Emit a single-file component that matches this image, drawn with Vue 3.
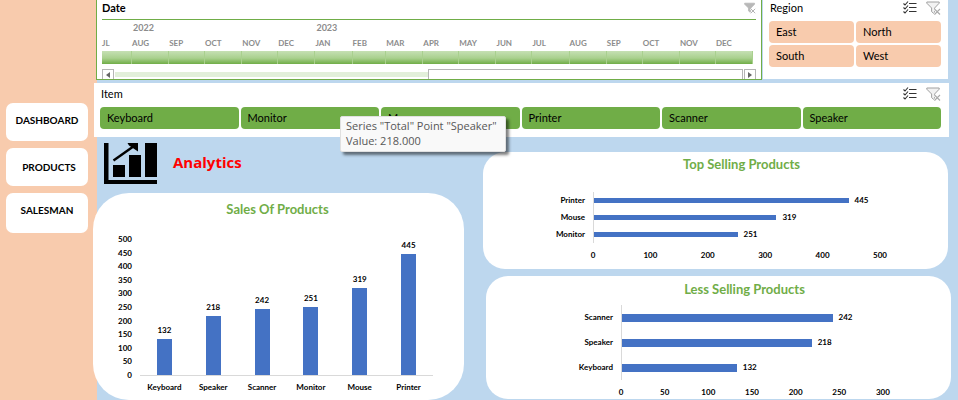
<script setup>
import { computed, h } from 'vue'

const navItems = ['Dashboard', 'Products', 'Salesman']

const months = [
  { name: 'JL', days: 25 },
  { name: 'AUG', days: 31, year: 2022 },
  { name: 'SEP', days: 30 },
  { name: 'OCT', days: 31 },
  { name: 'NOV', days: 30 },
  { name: 'DEC', days: 31 },
  { name: 'JAN', days: 31, year: 2023 },
  { name: 'FEB', days: 28 },
  { name: 'MAR', days: 31 },
  { name: 'APR', days: 30 },
  { name: 'MAY', days: 31 },
  { name: 'JUN', days: 30 },
  { name: 'JUL', days: 31 },
  { name: 'AUG', days: 31 },
  { name: 'SEP', days: 30 },
  { name: 'OCT', days: 31 },
  { name: 'NOV', days: 30 },
  { name: 'DEC', days: 31 },
]

const regions = ['East', 'North', 'South', 'West']
const items = ['Keyboard', 'Monitor', 'Mouse', 'Printer', 'Scanner', 'Speaker']

const sales = [
  { name: 'Keyboard', value: 132 },
  { name: 'Speaker', value: 218 },
  { name: 'Scanner', value: 242 },
  { name: 'Monitor', value: 251 },
  { name: 'Mouse', value: 319 },
  { name: 'Printer', value: 445 },
]
const salesTicks = [500, 450, 400, 350, 300, 250, 200, 150, 100, 50, 0]

const rankings = computed(() => {
  const sorted = [...sales].sort((a, b) => b.value - a.value)
  return [
    { id: 'top', title: 'Top Selling Products', rows: sorted.slice(0, 3), max: 500, ticks: [0, 100, 200, 300, 400, 500] },
    { id: 'less', title: 'Less Selling Products', rows: sorted.slice(-3), max: 300, ticks: [0, 50, 100, 150, 200, 250, 300] },
  ]
})

const MultiSelectIcon = () =>
  h('svg', { width: 14, height: 13, viewBox: '0 0 14 13', 'aria-hidden': 'true' }, [
    h('path', {
      d: 'M6 2.5h7.5M6 6.5h7.5M6 10.5h7.5M.5 2.5l1.5 1.5L5 .5M.5 6.5L2 8l3-3.5M.5 10.5L2 12l3-3.5',
      fill: 'none',
      stroke: '#333',
      'stroke-width': 1.1,
    }),
  ])

const ClearFilterIcon = (props) =>
  h('svg', { width: props.solid ? 12 : 15, height: props.solid ? 12 : 14, viewBox: '0 0 15 14', 'aria-hidden': 'true' }, [
    h('path', {
      d: 'M.8 1h12.4v1.2L8.6 7v6.2L5.6 10.6V7L.8 2.2z',
      fill: props.solid ? '#b8b8b8' : '#f2f2f2',
      stroke: props.solid ? '#b8b8b8' : '#a0a0a0',
      'stroke-width': 1,
    }),
    h('path', { d: 'M8.5 8l5.5 5.5M14 8l-5.5 5.5', fill: 'none', stroke: '#fff', 'stroke-width': 2.6 }),
    h('path', { d: 'M8.5 8l5.5 5.5M14 8l-5.5 5.5', fill: 'none', stroke: '#aaa', 'stroke-width': 1.1 }),
  ])
ClearFilterIcon.props = { solid: Boolean }
</script>

<template>
  <div class="page">
    <nav class="sidebar">
      <button v-for="item in navItems" :key="item" type="button" class="nav-button">{{ item }}</button>
    </nav>

    <main class="content">
      <div class="filters">
        <section class="timeline">
          <header class="timeline-head">
            <h2>Date</h2>
            <button type="button" class="icon-button" aria-label="Clear date filter"><ClearFilterIcon solid /></button>
          </header>
          <div class="months">
            <div v-for="(m, i) in months" :key="i" class="month" :style="{ flexGrow: m.days }">
              <span class="year">{{ m.year }}</span>
              <span class="month-name">{{ m.name }}</span>
              <span class="month-bar"></span>
            </div>
          </div>
          <div class="scroller">
            <button type="button" class="scroll-button" aria-label="Scroll left">
              <svg width="4" height="6" viewBox="0 0 4 6"><path d="M4 0v6L0 3z" fill="#666" /></svg>
            </button>
            <div class="scroll-track"></div>
            <div class="scroll-thumb"></div>
            <button type="button" class="scroll-button" aria-label="Scroll right">
              <svg width="4" height="6" viewBox="0 0 4 6"><path d="M0 0v6l4-3z" fill="#666" /></svg>
            </button>
          </div>
        </section>

        <section class="slicer region">
          <header class="slicer-head">
            <h2>Region</h2>
            <button type="button" class="icon-button" aria-label="Multi-select regions"><MultiSelectIcon /></button>
            <button type="button" class="icon-button" aria-label="Clear region filter"><ClearFilterIcon /></button>
          </header>
          <div class="options region-options">
            <button v-for="r in regions" :key="r" type="button" class="option peach">{{ r }}</button>
          </div>
        </section>
      </div>

      <section class="slicer item">
        <header class="slicer-head">
          <h2>Item</h2>
          <button type="button" class="icon-button" aria-label="Multi-select items"><MultiSelectIcon /></button>
          <button type="button" class="icon-button" aria-label="Clear item filter"><ClearFilterIcon /></button>
        </header>
        <div class="options item-options">
          <button v-for="i in items" :key="i" type="button" class="option green">{{ i }}</button>
        </div>
        <div class="tooltip" role="tooltip">Series "Total" Point "Speaker"<br />Value: 218.000</div>
      </section>

      <div class="board">
        <div class="left">
          <header class="analytics">
            <svg width="54" height="41" viewBox="0 0 54 41" aria-hidden="true">
              <path d="M1 0h4.5v37H54v4H1z" />
              <path d="M10 22h12v12H10zM26 12h12v22H26zM42 0h12v34H42z" />
              <path d="M10.5 17.5L31 3" fill="none" stroke="#000" stroke-width="2.4" />
              <path d="M24.500 0H35v8.500l-3-2-2.500-1.800-3.500-2.200z" />
            </svg>
            <h1>Analytics</h1>
          </header>

          <section class="card sales">
            <h2 class="card-title">Sales Of Products</h2>
            <div class="column-chart">
              <div class="y-axis">
                <span v-for="t in salesTicks" :key="t">{{ t }}</span>
              </div>
              <div class="columns">
                <div v-for="s in sales" :key="s.name" class="column">
                  <span class="column-value">{{ s.value }}</span>
                  <span class="column-bar" :style="{ height: s.value / 5 + '%' }"></span>
                </div>
              </div>
              <div class="column-names">
                <span v-for="s in sales" :key="s.name">{{ s.name }}</span>
              </div>
            </div>
          </section>
        </div>

        <div class="right">
          <section v-for="r in rankings" :key="r.id" class="card ranking" :class="r.id">
            <h2 class="card-title">{{ r.title }}</h2>
            <div class="bar-chart">
              <div v-for="row in r.rows" :key="row.name" class="bar-row">
                <span class="bar-name">{{ row.name }}</span>
                <div class="bar-track">
                  <span class="bar" :style="{ width: (row.value / r.max) * 100 + '%' }"></span>
                  <span class="bar-value">{{ row.value }}</span>
                </div>
              </div>
              <div class="x-axis">
                <span v-for="t in r.ticks" :key="t">{{ t }}</span>
              </div>
            </div>
          </section>
        </div>
      </div>
    </main>
  </div>
</template>

<style>
body {
  margin: 0;
}
</style>

<style scoped>
.page {
  display: flex;
  min-height: 100vh;
  background: linear-gradient(to right, #f8cbad 97px, #bdd7ee 97px);
  font-family: Lato, "Liberation Sans", sans-serif;
  color: #000;
}
.page * {
  box-sizing: border-box;
}
h1,
h2 {
  margin: 0;
}
button {
  margin: 0;
  padding: 0;
  border: 0;
  font-family: inherit;
  color: inherit;
}
svg {
  display: block;
}

.sidebar {
  display: flex;
  flex-direction: column;
  gap: 7px;
  flex: none;
  width: 93px;
  padding: 103px 5px 0 6px;
}
.nav-button {
  height: 38px;
  padding-bottom: 4px;
  border-radius: 7px;
  background: #fff;
  font-size: 10px;
  font-weight: 700;
  text-transform: uppercase;
}
.nav-button:nth-child(2) {
  padding: 0 0 0 4px;
}
.nav-button:last-child {
  height: 40px;
  padding-bottom: 7px;
}

.content {
  flex: 1;
  min-width: 0;
  padding-right: 7px;
}

.filters {
  display: flex;
  gap: 1px;
  height: 80px;
  padding: 0 3px;
}
.timeline {
  flex: 1;
  min-width: 0;
  overflow: hidden;
  padding: 0 5px;
  border: 1px solid #70ad47;
  border-top: 0;
  background: #fff;
}
.timeline-head {
  display: flex;
  justify-content: space-between;
  align-items: center;
  height: 20px;
  padding: 0 0 3px;
  border-bottom: 1px solid #70ad47;
}
.timeline-head h2 {
  font-size: 11px;
  line-height: 16px;
}
.icon-button {
  background: none;
}
.months {
  display: flex;
  padding-right: 3px;
}
.month {
  display: flex;
  flex-direction: column;
  flex-basis: 0;
  min-width: 0;
  color: #8c8c8c;
  font-size: 8px;
  font-weight: 700;
}
.year {
  height: 15px;
  padding-left: 1px;
  font-size: 9px;
  line-height: 15px;
}
.month-name {
  height: 16px;
  line-height: 16px;
}
.month-bar {
  height: 13px;
  border-right: 1px solid #a9d08e;
  background: linear-gradient(#c6e0b4, #a9d08e 55%, #70ad47);
}
.scroller {
  display: flex;
  gap: 1px;
  height: 12px;
  margin-top: 5px;
}
.scroll-button {
  display: flex;
  align-items: center;
  justify-content: center;
  width: 12px;
  border: 1px solid #b5b5b5;
  background: #fff;
}
.scroll-track {
  flex: 1;
  height: 5px;
  margin: 3px 0 0;
  background: #e2efda;
}
.scroll-thumb {
  flex: 1;
  margin-left: -1px;
  border: 1px solid #b5b5b5;
}

.slicer {
  background: #fff;
}
.slicer-head {
  display: flex;
  align-items: center;
  gap: 9px;
}
.slicer-head h2 {
  flex: 1;
  font-size: 11px;
  font-weight: 400;
}
.options {
  display: grid;
  gap: 2px;
}
.option {
  height: 22px;
  padding-left: 7px;
  border-radius: 4px;
  font-size: 11px;
  line-height: 20px;
  text-align: left;
}
.peach {
  background: #f8cbad;
}
.green {
  background: #70ad47;
}
.region {
  width: 185px;
  height: 79px;
  padding: 0 7px 0 6px;
}
.region .slicer-head {
  height: 15px;
  margin-bottom: 6px;
  padding-left: 1px;
}
.region-options {
  grid-template-columns: repeat(2, 1fr);
}
.item {
  position: relative;
  height: 54px;
  margin: 3px 2px 0 1px;
  padding: 0 8px 0 6px;
}
.item .slicer-head {
  height: 21px;
  margin-bottom: 3px;
  padding-left: 1px;
}
.item-options {
  grid-template-columns: repeat(6, 1fr);
}
.tooltip {
  position: absolute;
  top: 33px;
  left: 246px;
  padding: 1px 8px 3px 5px;
  border: 1px solid #e0e0e0;
  border-radius: 2px;
  background: #f9f9f9;
  box-shadow: 3px 3px 3px rgba(0, 0, 0, 0.5);
  color: #575757;
  font-family: "Open Sans", "Noto Sans", sans-serif;
  font-size: 11px;
  line-height: 15px;
  white-space: nowrap;
}

.board {
  display: grid;
  grid-template-columns: 371fr 468fr;
  gap: 19px;
}
.analytics {
  display: flex;
  gap: 16px;
  height: 56px;
  padding: 6px 0 0 10px;
}
.analytics h1 {
  color: #f00;
  font-family: "Open Sans", "Noto Sans", sans-serif;
  font-size: 15px;
  line-height: 38px;
}
.card {
  background: #fff;
}
.card-title {
  color: #70ad47;
  font-size: 13px;
  line-height: 16px;
  text-align: center;
}

.sales {
  height: 207px;
  padding: 8px 31px 0 15px;
  border-radius: 36px;
}
.sales .card-title {
  padding-left: 14px;
}
.column-chart {
  display: grid;
  grid-template-columns: 24px 1fr;
  column-gap: 8px;
  margin-top: 15px;
  font-size: 8px;
  font-weight: 700;
}
.y-axis {
  display: flex;
  flex-direction: column;
  justify-content: space-between;
  height: 150px;
  padding: 2px 0;
  line-height: 10px;
  text-align: right;
}
.columns,
.column-names {
  display: grid;
  grid-template-columns: repeat(6, 1fr);
}
.columns {
  height: 137px;
  margin-top: 7px;
  border-bottom: 1px solid #d9d9d9;
}
.column {
  display: flex;
  flex-direction: column;
  justify-content: flex-end;
  align-items: center;
  height: 136px;
}
.column-value {
  margin-bottom: 4px;
  line-height: 10px;
}
.column-bar {
  flex: none;
  width: 15px;
  background: #4472c4;
}
.column-names {
  grid-column: 2;
  line-height: 10px;
  text-align: center;
}

.right {
  display: flex;
  flex-direction: column;
  gap: 7px;
  padding-top: 15px;
}
.ranking {
  padding: 4px 68px 0 0;
  border-radius: 22px;
}
.ranking .card-title {
  padding-left: 120px;
}
.top {
  height: 117px;
  margin-right: 3px;
}
.less {
  height: 123px;
  margin-left: 3px;
  padding-top: 5px;
}
.bar-chart {
  --label: 110px;
  --row: 17px;
  --bar: 5px;
  padding-top: 20px;
  font-size: 8px;
  font-weight: 700;
}
.less .bar-chart {
  --label: 135px;
  --row: 25px;
  --bar: 8px;
  padding-top: 8px;
}
.bar-row {
  display: grid;
  grid-template-columns: var(--label) 1fr;
  height: var(--row);
  line-height: var(--row);
}
.bar-name {
  padding-right: 8px;
  text-align: right;
}
.bar-track {
  display: flex;
  align-items: center;
  border-left: 1px solid #d9d9d9;
}
.bar {
  flex: none;
  height: var(--bar);
  background: #4472c4;
}
.bar-value {
  margin-left: 6px;
}
.x-axis {
  display: flex;
  justify-content: space-between;
  margin-left: var(--label);
  padding-top: 7px;
  line-height: 10px;
}
.x-axis span {
  display: flex;
  justify-content: center;
  width: 0;
}
</style>
